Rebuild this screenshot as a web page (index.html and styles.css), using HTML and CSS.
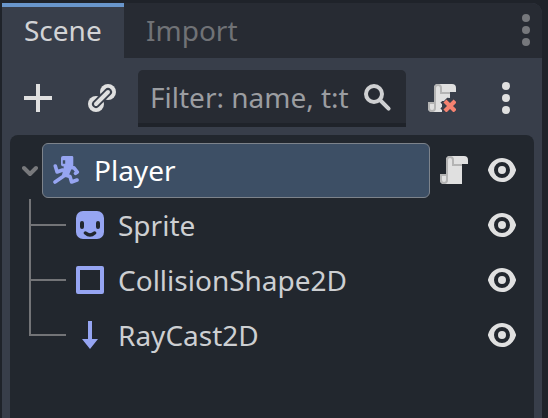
FILE: index.html
```html
<!DOCTYPE html>
<html lang="en">
<head>
<meta charset="utf-8">
<title>Scene</title>
<link rel="stylesheet" href="styles.css">
</head>
<body>
<svg class="defs" width="0" height="0">
  <symbol id="eye" viewBox="1 1 14 14">
    <path fill="#e0e0e0" fill-rule="evenodd" d="M8 2C4.8 2 2.2 4 1 7.7v.6C2.2 12 4.8 14 8 14s5.800-2 7-5.700v-.6C13.800 4 11.200 2 8 2zM8 4a4 4 0 0 1 0 8 4 4 0 0 1 0-8zM8 6a2 2 0 0 0 0 4 2 2 0 0 0 0-4z"/>
  </symbol>
  <symbol id="dots" viewBox="0 0 8 32">
    <circle cx="4" cy="4" r="4"/><circle cx="4" cy="16" r="4"/><circle cx="4" cy="28" r="4"/>
  </symbol>
</svg>
<div class="dock">
  <div class="tabs">
    <div class="tab active">Scene</div>
    <div class="tab">Import</div>
    <svg class="tab-menu" width="8" height="32"><use href="#dots"/></svg>
  </div>
  <div class="toolbar">
    <svg class="icon" viewBox="1 1 14 14"><path fill="#e0e0e0" d="M7 1h2v6h6v2H9v6H7V9H1V7h6z"/></svg>
    <svg class="icon link" viewBox="1 1 14 14">
      <circle cx="11" cy="5" r="4" fill="#e0e0e0"/><circle cx="5" cy="11" r="4" fill="#e0e0e0"/>
      <path d="M5 11l6-6" stroke="#383e4a" stroke-width="4" stroke-linecap="round"/>
      <path d="M5 11l6-6" stroke="#e0e0e0" stroke-width="2" stroke-linecap="round"/>
    </svg>
    <div class="filter">
      <span>Filter: name, t:t</span>
      <svg class="icon" viewBox="1 1 14 14"><g fill="none" stroke="#cfd0d2" stroke-width="2"><circle cx="6" cy="6" r="4"/><path d="M9 9l4.300 4.300" stroke-linecap="round"/></g></svg>
    </div>
    <svg class="icon detach" viewBox="1 1 14 14">
      <path fill="#e0e0e0" d="M6 1a2 2 0 0 0-2 2v7H1v3a2 2 0 0 0 2 2h5v-1l-.8-.8.8-.8V11l-.8-.6.9-.9H9l1.600-1.600L12 8V5h3V3a2 2 0 0 0-2-2z"/>
      <path fill="#b4b4b4" d="M6 1a2 2 0 0 0-2 2v7H1v3a2 2 0 0 0 4 0V3a1 1 0 0 1 2 0v3h5V5H8V3a2 2 0 0 0-2-2z"/>
      <path fill="#e0e0e0" d="M2 11h2v2a1 1 0 0 1-2 0z"/>
      <path d="M10.200 10.200l3.600 3.600m0-3.600l-3.600 3.600" stroke="#f58270" stroke-width="2.100" stroke-linecap="square"/>
    </svg>
    <svg class="more" width="8" height="32"><use href="#dots"/></svg>
  </div>
  <div class="tree">
    <div class="row root">
      <svg class="chevron" width="16" height="12" viewBox="0 0 16 12"><path d="M2 3l6 6 6-6" fill="none" stroke="#78797c" stroke-width="4" stroke-linecap="round" stroke-linejoin="round"/></svg>
      <div class="selected">
        <svg class="icon" viewBox="0 0 28 28">
          <path fill="#96a5f2" fill-rule="evenodd" d="M11 0h9q1.300 0 1.300 1.300v8q0 1.300-1.300 1.300H11.500Q9 10.600 9 8.500V2q0-2 2-2zM10.800 4.300v3.400h2.400V4.300z"/>
          <path fill="#96a5f2" d="M12 10h7v4l-2 5h-7z"/>
          <path d="M3.300 10l1.800 6 5.500-2M12.500 19.500L3 26M13 19l5 1.500 1.600 5.500 5.400-2M18 11.800h4l3.300 4.200-1.800 1.400" fill="none" stroke="#96a5f2" stroke-width="3.600" stroke-linecap="round" stroke-linejoin="round"/>
        </svg>
        <span>Player</span>
      </div>
      <svg class="icon script" viewBox="1 1 14 14">
        <path fill="#e0e0e0" d="M6 1a2 2 0 0 0-2 2v7H1v3a2 2 0 0 0 2 2h9V5h3V3a2 2 0 0 0-2-2z"/>
        <path fill="#b4b4b4" d="M6 1a2 2 0 0 0-2 2v7H1v3a2 2 0 0 0 4 0V3a1 1 0 0 1 2 0v3h5V5H8V3a2 2 0 0 0-2-2z"/>
        <path fill="#e0e0e0" d="M2 11h2v2a1 1 0 0 1-2 0z"/>
      </svg>
      <svg class="icon eye"><use href="#eye"/></svg>
    </div>
    <div class="row child">
      <i class="branch"></i>
      <svg class="icon" viewBox="0 0 28 28"><rect width="28" height="28" rx="7" fill="#96a5f2"/><path d="M6 12v4M22 12v4" stroke="#22272e" stroke-width="4" stroke-linecap="round"/><path d="M9.500 22q4.500 4 9 0" fill="none" stroke="#22272e" stroke-width="3.500" stroke-linecap="round"/></svg>
      <span>Sprite</span>
      <svg class="icon eye"><use href="#eye"/></svg>
    </div>
    <div class="row child">
      <i class="branch"></i>
      <svg class="icon" viewBox="0 0 28 28"><rect x="2" y="2" width="24" height="24" fill="none" stroke="#96a5f2" stroke-width="4" stroke-linejoin="round"/></svg>
      <span>CollisionShape2D</span>
      <svg class="icon eye"><use href="#eye"/></svg>
    </div>
    <div class="row child">
      <i class="branch"></i>
      <svg class="icon" viewBox="0 0 28 28"><path fill="#96a5f2" d="M12 0h4v18h6l-8 10-8-10h6z"/></svg>
      <span>RayCast2D</span>
      <svg class="icon eye"><use href="#eye"/></svg>
    </div>
  </div>
</div>
</body>
</html>
```

FILE: styles.css
```css
* { box-sizing: border-box; }
html, body { height: 100%; }
body {
  margin: 0;
  padding: 3px 6px 0 2px;
  overflow: hidden;
  background: #1f232a;
  font: 28px/38px "Noto Sans", sans-serif;
  color: #cdcfd2;
}
svg { display: block; flex: none; }
.defs { position: absolute; }
.icon { width: 28px; height: 28px; }
.dock {
  display: flex;
  flex-direction: column;
  height: 100%;
  background: #383e4a;
  border-radius: 0 10px 0 0;
  overflow: hidden;
}
.tabs { display: flex; height: 55px; flex: none; background: #272b33; }
.tab { padding: 8px 22px 0; color: #707276; }
.tab.active {
  width: 122px;
  padding-top: 4px;
  border-top: 4px solid #6996cc;
  background: #383e4a;
  color: #d2d3d5;
}
.tab-menu { margin: 11px 12px 0 auto; fill: #76787c; }
.toolbar {
  display: flex;
  align-items: center;
  height: 57px;
  flex: none;
  margin: 12px 0 8px;
  padding: 0 32px 0 22px;
}
.toolbar > .icon, .more, .row .icon { margin-bottom: 1px; }
.link { margin-left: 36px; }
.filter {
  display: flex;
  justify-content: space-between;
  width: 268px;
  height: 57px;
  margin-left: 22px;
  padding: 8px 14px 0 12px;
  background: #272b33;
  border-bottom: 4px solid #1f232a;
  border-radius: 5px 5px 0 0;
  color: #9b9da1;
  white-space: nowrap;
}
.filter .icon { margin-top: 6px; }
.detach { margin-left: 22px; }
.more { margin-left: auto; fill: #e0e0e0; }
.tree {
  flex: 1;
  margin: 0 8px;
  padding: 8px 18px 0 12px;
  background: #22272e;
  border-radius: 8px 8px 0 0;
}
.row { display: flex; align-items: center; height: 55px; }
.row span { margin: 0 0 2px 14px; }
.chevron { margin-right: 4px; }
.selected {
  display: flex;
  align-items: center;
  width: 388px;
  height: 55px;
  padding-left: 9px;
  border: 1px solid #7d838b;
  border-radius: 6px;
  background: #3d4f65;
  color: #fff;
}
.script { margin-left: 10px; }
.eye { margin-left: auto; }
.child { padding-left: 7px; }
.branch {
  align-self: flex-start;
  width: 37px;
  height: 55px;
  margin: -27px 10px 0 0;
  border: solid #737477;
  border-width: 0 0 2px 2px;
}
.root + .child .branch { height: 27px; margin-top: 1px; }
```
